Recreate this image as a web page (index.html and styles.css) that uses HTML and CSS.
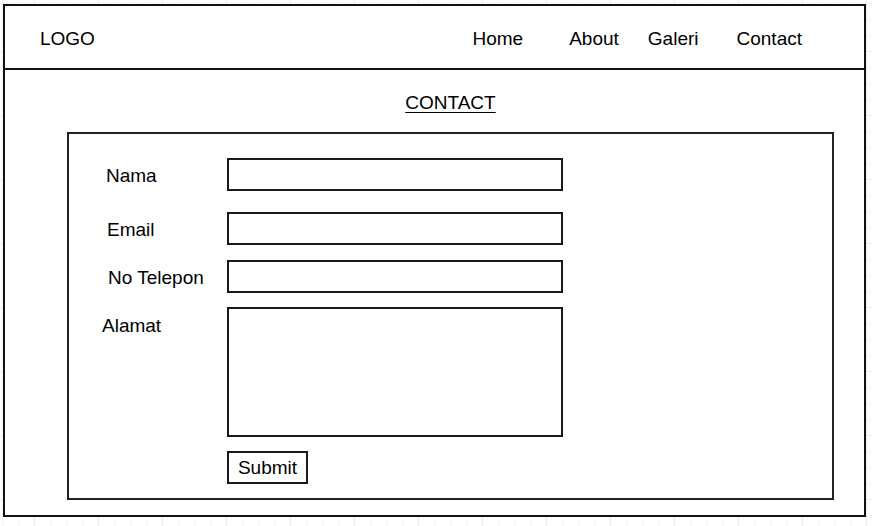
FILE: index.html
```html
<!DOCTYPE html>
<html lang="id">
<head>
<meta charset="utf-8">
<title>Contact</title>
<link rel="stylesheet" href="styles.css">
</head>
<body>
<div class="frame">
  <header class="header">
    <div class="logo">LOGO</div>
    <nav class="nav">
      <a class="nav-link nav-home" href="#">Home</a>
      <a class="nav-link nav-about" href="#">About</a>
      <a class="nav-link nav-galeri" href="#">Galeri</a>
      <a class="nav-link nav-contact" href="#">Contact</a>
    </nav>
  </header>
  <main class="main">
    <h1 class="title">CONTACT</h1>
    <form class="form-box">
      <div class="row row-nama">
        <label class="label label-nama" for="nama">Nama</label>
        <input class="field" id="nama" type="text">
      </div>
      <div class="row row-email">
        <label class="label label-email" for="email">Email</label>
        <input class="field" id="email" type="text">
      </div>
      <div class="row row-telepon">
        <label class="label label-telepon" for="telepon">No Telepon</label>
        <input class="field" id="telepon" type="text">
      </div>
      <div class="row row-alamat">
        <label class="label label-alamat" for="alamat">Alamat</label>
        <textarea class="field area" id="alamat"></textarea>
      </div>
      <div class="row row-submit">
        <span class="label"></span>
        <button class="submit" type="button">Submit</button>
      </div>
    </form>
  </main>
</div>
</body>
</html>
```

FILE: styles.css
```css
* { box-sizing: border-box; }

html, body {
  margin: 0;
  padding: 0;
}

body {
  width: 872px;
  height: 526px;
  overflow: hidden;
  font-family: "Liberation Sans", Arial, sans-serif;
  font-size: 19px;
  line-height: 22px;
  color: #000;
  background-color: #fff;
  background-image:
    linear-gradient(to right, #ececec 1px, transparent 1px),
    linear-gradient(to bottom, #ececec 1px, transparent 1px),
    linear-gradient(to right, #f5f5f5 1px, transparent 1px),
    linear-gradient(to bottom, #f5f5f5 1px, transparent 1px);
  background-size: 64px 64px, 64px 64px, 16px 16px, 16px 16px;
  background-position: 34px 0, 0 51px, 2px 0, 0 3px;
  padding-top: 4px;
  padding-left: 3px;
}

.frame {
  width: 863px;
  height: 513px;
  border: 2px solid #111;
  background: #fff;
  display: flex;
  flex-direction: column;
}

.header {
  height: 64px;
  flex: none;
  border-bottom: 2px solid #111;
  display: flex;
  align-items: center;
  padding: 4px 62px 0 35px;
}

.logo {
  flex: none;
}

.nav {
  margin-left: auto;
  display: flex;
}

.nav-link {
  color: #000;
  text-decoration: none;
}

.nav-about { margin-left: 46px; }
.nav-galeri { margin-left: 29px; }
.nav-contact { margin-left: 38px; }

.main {
  flex: 1;
  padding: 22px 30px 0 62px;
}

.title {
  margin: 0 0 18px;
  width: 767px;
  font-size: 19px;
  line-height: 22px;
  font-weight: normal;
  text-align: center;
  text-decoration: underline;
  text-underline-offset: 3px;
}

.form-box {
  width: 767px;
  height: 368px;
  border: 2px solid #222;
  padding-top: 24px;
  margin: 0;
}

.row {
  display: flex;
  align-items: center;
  margin-bottom: 14px;
}

.row-nama { margin-bottom: 21px; }
.row-email { margin-bottom: 15px; }
.row-alamat { align-items: flex-start; }

.label {
  width: 158px;
  flex: none;
  padding-top: 2px;
  padding-left: 37px;
}

.label-email { padding-left: 38px; }
.label-telepon { padding-left: 39px; }
.label-alamat { padding-left: 33px; padding-top: 8px; }

.field {
  width: 336px;
  height: 33px;
  border: 2px solid #1a1a1a;
  border-radius: 0;
  background: #fff;
  margin: 0;
  padding: 2px 6px;
  font: inherit;
  outline: none;
}

.area {
  height: 130px;
  resize: none;
  display: block;
}

.submit {
  width: 81px;
  height: 33px;
  border: 2px solid #1a1a1a;
  border-radius: 0;
  background: #fff;
  margin: 0;
  padding: 0;
  font-family: "Liberation Sans", Arial, sans-serif;
  font-size: 19px;
  line-height: 22px;
  color: #000;
  text-align: center;
}
```
